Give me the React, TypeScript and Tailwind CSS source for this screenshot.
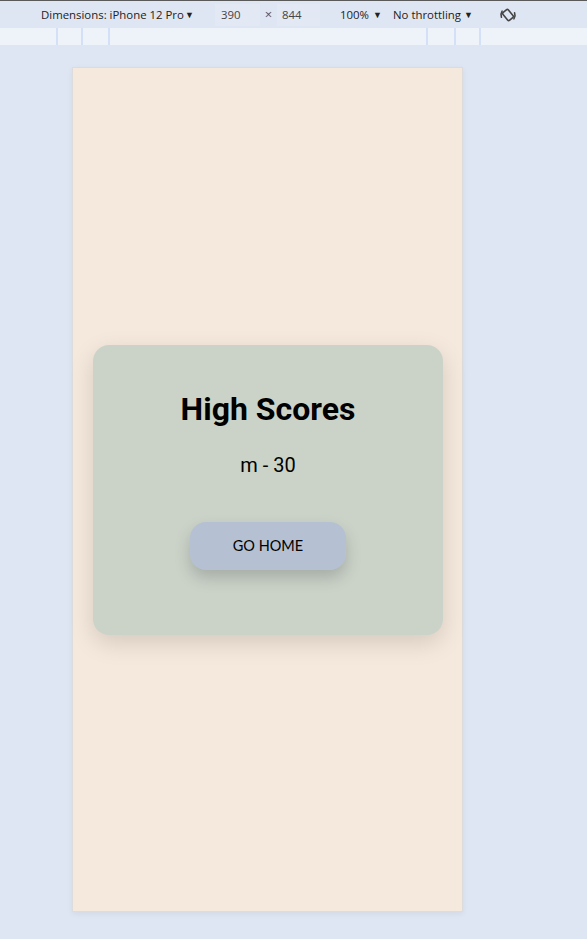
import React from "react";

function RotateIcon() {
  return (
    <svg width="20" height="20" viewBox="0 0 20 20" fill="none" stroke="#444" strokeWidth="1.6" strokeLinecap="round">
      <g transform="rotate(-40 10 10)">
        <rect x="6.5" y="5" width="7" height="10" rx="1.5" />
        <path d="M3.5 7.5 A7 7 0 0 1 8 3.2" />
        <path d="M16.5 12.5 A7 7 0 0 1 12 16.8" />
      </g>
    </svg>
  );
}

export default function App() {
  return (
    <div
      className="w-[587px] h-[939px] bg-[#dfe6f3] flex flex-col overflow-hidden"
      style={{ fontFamily: "'Open Sans', 'Noto Sans', sans-serif" }}
    >
      {/* toolbar */}
      <div className="h-[28px] shrink-0 border-t border-[#5a5a5a] flex items-center text-[11.4px] text-[#222]">
        <div className="ml-[41px] w-[153px] flex items-center justify-between">
          <span>Dimensions: iPhone 12 Pro</span>
          <span className="text-[9px]">▼</span>
        </div>
        <div className="ml-[21px] w-[45px] h-[22px] bg-[#e2e8f4] flex items-center pl-[6px] text-[#444]">390</div>
        <div className="w-[17px] flex justify-center text-[#555] text-[13px]">×</div>
        <div className="w-[43px] h-[22px] bg-[#e2e8f4] flex items-center pl-[5px] text-[#444]">844</div>
        <div className="ml-[20px] w-[42px] flex items-center justify-between">
          <span>100%</span>
          <span className="text-[9px]">▼</span>
        </div>
        <div className="ml-[11px] w-[80px] flex items-center justify-between">
          <span>No throttling</span>
          <span className="text-[9px]">▼</span>
        </div>
        <div className="ml-[25px] flex items-center">
          <RotateIcon />
        </div>
      </div>
      {/* ruler */}
      <div className="h-[18px] shrink-0 bg-[#eef2f9] border-b border-[#dde6f5] relative">
        <div className="absolute left-[56px] top-0 h-full w-[2px] bg-[#d3e0f7]" />
        <div className="absolute left-[81px] top-0 h-full w-[2px] bg-[#d3e0f7]" />
        <div className="absolute left-[108px] top-0 h-full w-[2px] bg-[#d3e0f7]" />
        <div className="absolute left-[426px] top-0 h-full w-[2px] bg-[#d3e0f7]" />
        <div className="absolute left-[454px] top-0 h-full w-[2px] bg-[#d3e0f7]" />
        <div className="absolute left-[479px] top-0 h-full w-[2px] bg-[#d3e0f7]" />
      </div>
      {/* device */}
      <div className="pt-[21px] pl-[72px]">
        <div
          className="w-[391px] h-[845px] bg-[#f5e8dc] border border-[#dcdcdc] shadow-[0_2px_6px_rgba(0,0,0,0.06)] flex items-center justify-center"
          style={{ fontFamily: "Roboto, 'Noto Sans', sans-serif" }}
        >
          <div className="w-[350px] h-[290px] bg-[#cbd3c9] rounded-[16px] shadow-[0_8px_24px_rgba(0,0,0,0.13)] flex flex-col items-center ml-[1px]">
            <h1 className="mt-[45px] text-[32px] font-bold text-black leading-[38px]">High Scores</h1>
            <p className="mt-[25px] text-[20px] text-black leading-[24px]">m - 30</p>
            <button
              className="mt-[45px] w-[156px] h-[48px] bg-[#b5c1d2] rounded-[16px] text-[14.5px] text-black shadow-[0_8px_16px_rgba(0,0,0,0.18)]"
              style={{ fontFamily: "Lato, 'Open Sans', sans-serif" }}
            >
              GO HOME
            </button>
          </div>
        </div>
      </div>
    </div>
  );
}
